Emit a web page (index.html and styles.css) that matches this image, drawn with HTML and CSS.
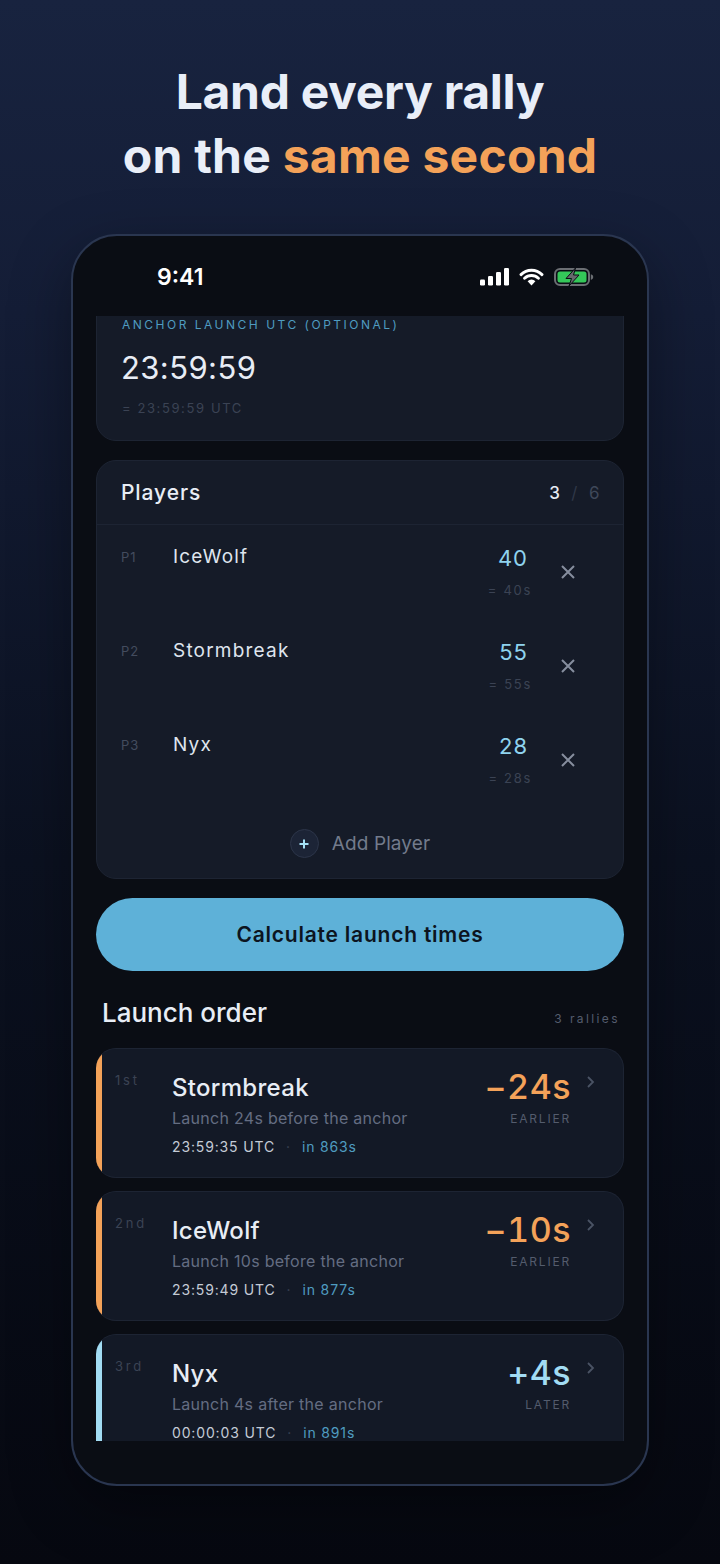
FILE: index.html
```html
<!DOCTYPE html>
<html>
<head>
<title>Launch order</title>
<link rel="stylesheet" href="styles.css">
</head>
<body>
    <h1 class="headline">Land every rally<br>on the <span class="accent">same second</span></h1>

    <div class="phone">
        <div class="status-bar">
            <span class="clock">9:41</span>
            <div class="status-icons">
                <svg width="29" height="18" viewBox="0 0 29 18">
                    <rect x="0" y="11.5" width="5" height="6" rx="1.2" fill="#fff"/>
                    <rect x="8" y="8" width="5" height="9.5" rx="1.2" fill="#fff"/>
                    <rect x="16" y="4" width="5" height="13.5" rx="1.2" fill="#fff"/>
                    <rect x="24" y="0" width="5" height="17.5" rx="1.2" fill="#fff"/>
                </svg>
                <svg width="25" height="18" viewBox="0 0 25 18">
                    <path d="M2 6.6a15 15 0 0 1 21 0M5.6 10.2a10 10 0 0 1 13.8 0" fill="none" stroke="#fff" stroke-width="2.9" stroke-linecap="round"/>
                    <path d="M8.6 13.2a5.5 5.5 0 0 1 7.8 0L12.5 17.6z" fill="#fff"/>
                </svg>
                <svg width="40" height="18" viewBox="0 0 40 18">
                    <rect x="1" y="1" width="34" height="16" rx="5" fill="none" stroke="#6b6e73" stroke-width="2"/>
                    <rect x="3.5" y="3.5" width="29" height="11" rx="2.5" fill="#34c759"/>
                    <path d="M36.8 6.2c1.6.4 2.4 1.4 2.4 2.8s-.8 2.4-2.4 2.8z" fill="#6b6e73"/>
                    <path d="M21.5 0 12 10.5h5.500L15 18l10-11h-5.500z" fill="#66696d" stroke="#0a0d14" stroke-width="1"/>
                </svg>
            </div>
        </div>

        <div class="screen">
            <div class="card anchor-card">
                <div class="anchor-label">ANCHOR LAUNCH UTC (OPTIONAL)</div>
                <div class="anchor-time">23:59:59</div>
                <div class="anchor-hint">= 23:59:59 UTC</div>
            </div>

            <div class="card players-card">
                <div class="players-head">
                    <span class="players-title">Players</span>
                    <span class="players-count"><b>3</b><i>/</i><span>6</span></span>
                </div>

                <div class="player-row">
                    <span class="player-num">P1</span>
                    <span class="player-name">IceWolf</span>
                    <div class="player-march">
                        <div class="march-value">40</div>
                        <div class="march-sub">= 40s</div>
                    </div>
                    <svg class="remove-icon" width="14" height="14" viewBox="0 0 14 14"><path d="M1 1l12 12M13 1 1 13"/></svg>
                </div>
                <div class="player-row">
                    <span class="player-num">P2</span>
                    <span class="player-name">Stormbreak</span>
                    <div class="player-march">
                        <div class="march-value">55</div>
                        <div class="march-sub">= 55s</div>
                    </div>
                    <svg class="remove-icon" width="14" height="14" viewBox="0 0 14 14"><path d="M1 1l12 12M13 1 1 13"/></svg>
                </div>
                <div class="player-row">
                    <span class="player-num">P3</span>
                    <span class="player-name">Nyx</span>
                    <div class="player-march">
                        <div class="march-value">28</div>
                        <div class="march-sub">= 28s</div>
                    </div>
                    <svg class="remove-icon" width="14" height="14" viewBox="0 0 14 14"><path d="M1 1l12 12M13 1 1 13"/></svg>
                </div>

                <div class="add-player">
                    <span class="add-circle">
                        <svg width="10" height="10" viewBox="0 0 10 10"><path d="M5 .5v9M.5 5h9"/></svg>
                    </span>
                    <span>Add Player</span>
                </div>
            </div>

            <button class="calc-button">Calculate launch times</button>

            <div class="order-head">
                <span class="order-title">Launch order</span>
                <span class="order-count">3 rallies</span>
            </div>

            <div class="card result-card earlier">
                <span class="result-rank">1st</span>
                <div class="result-main">
                    <div class="result-name">Stormbreak</div>
                    <div class="result-desc">Launch 24s before the anchor</div>
                    <div class="result-time">23:59:35 UTC<i>·</i><span>in 863s</span></div>
                </div>
                <div class="result-delta">
                    <div class="delta-value">−24s</div>
                    <div class="delta-label">EARLIER</div>
                </div>
                <svg class="chevron" width="9" height="14" viewBox="0 0 9 14"><path d="M2 2l5 5-5 5"/></svg>
            </div>

            <div class="card result-card earlier">
                <span class="result-rank">2nd</span>
                <div class="result-main">
                    <div class="result-name">IceWolf</div>
                    <div class="result-desc">Launch 10s before the anchor</div>
                    <div class="result-time">23:59:49 UTC<i>·</i><span>in 877s</span></div>
                </div>
                <div class="result-delta">
                    <div class="delta-value">−10s</div>
                    <div class="delta-label">EARLIER</div>
                </div>
                <svg class="chevron" width="9" height="14" viewBox="0 0 9 14"><path d="M2 2l5 5-5 5"/></svg>
            </div>

            <div class="card result-card later">
                <span class="result-rank">3rd</span>
                <div class="result-main">
                    <div class="result-name">Nyx</div>
                    <div class="result-desc">Launch 4s after the anchor</div>
                    <div class="result-time">00:00:03 UTC<i>·</i><span>in 891s</span></div>
                </div>
                <div class="result-delta">
                    <div class="delta-value">+4s</div>
                    <div class="delta-label">LATER</div>
                </div>
                <svg class="chevron" width="9" height="14" viewBox="0 0 9 14"><path d="M2 2l5 5-5 5"/></svg>
            </div>
        </div>
    </div>
</body>
</html>
```

FILE: styles.css
```css
html, body {
    margin: 0;
    height: 1564px;
    overflow: hidden;
}

body {
    font-family: Inter, "Liberation Sans", sans-serif;
    background: linear-gradient(180deg, #18233f 0%, #141d36 20%, #0b1120 55%, #060810 100%);
    color: #e8edf5;
}

.headline {
    margin: 0;
    padding-top: 60px;
    height: 234px;
    box-sizing: border-box;
    text-align: center;
    font-size: 48px;
    line-height: 64px;
    font-weight: 700;
    letter-spacing: 0.25px;
    color: #e9eef8;
}

.headline::first-line {
    letter-spacing: -0.3px;
}

.accent {
    color: #f4a259;
}

.phone {
    width: 578px;
    height: 1252px;
    margin: 0 auto;
    box-sizing: border-box;
    border: 2px solid #2a3650;
    border-radius: 46px;
    background: #0a0d14;
    box-shadow: 0 20px 60px rgba(0, 0, 0, 0.35);
}

.status-bar {
    height: 80px;
    padding: 2px 53px 0 84px;
    display: flex;
    justify-content: space-between;
    align-items: center;
    box-sizing: border-box;
}

.clock {
    font-size: 23px;
    font-weight: 600;
    color: #fff;
}

.status-icons {
    display: flex;
    align-items: center;
    gap: 10px;
}

.screen {
    height: 1125px;
    padding: 0 23px;
    overflow: hidden;
}

.card {
    background: #151b28;
    border: 1px solid #1d2433;
    border-radius: 20px;
    box-sizing: border-box;
}

.anchor-card {
    margin-top: -20px;
    height: 145px;
    padding: 21px 25px 0;
}

.anchor-label {
    font-size: 12px;
    line-height: 14px;
    letter-spacing: 2.5px;
    color: #4f9cc0;
}

.anchor-time {
    margin: 16px 0 0 -1px;
    font-size: 31px;
    line-height: 40px;
    letter-spacing: 0.4px;
    color: #e8edf5;
}

.anchor-hint {
    margin-top: 12px;
    font-size: 13px;
    line-height: 16px;
    letter-spacing: 1.6px;
    color: #3b4354;
}

.players-card {
    margin-top: 19px;
    height: 419px;
}

.players-head {
    height: 63px;
    padding: 0 23px 0 24px;
    display: flex;
    justify-content: space-between;
    align-items: center;
    border-bottom: 1px solid #1d2433;
}

.players-title {
    font-size: 21px;
    font-weight: 500;
    letter-spacing: 0.9px;
    color: #e8edf5;
}

.players-count {
    font-size: 17px;
    letter-spacing: 0.5px;
    color: #3f4859;
}

.players-count b {
    font-weight: 500;
    color: #e8edf5;
}

.players-count i {
    margin: 0 11px;
    font-style: normal;
    color: #2f3747;
}

.player-row {
    height: 94px;
    padding: 0 48px 0 24px;
    display: flex;
    align-items: center;
}

.player-num {
    width: 52px;
    align-self: flex-start;
    margin-top: 24px;
    font-size: 13px;
    line-height: 16px;
    letter-spacing: 1px;
    color: #434c5e;
}

.player-name {
    flex: 1;
    align-self: flex-start;
    margin-top: 19px;
    font-size: 19px;
    line-height: 26px;
    letter-spacing: 1.2px;
    color: #dfe5ee;
}

.player-march {
    width: 60px;
    margin-right: 29px;
    align-self: flex-start;
    text-align: right;
}

.march-value {
    margin-top: 18px;
    padding-right: 4px;
    font-size: 22px;
    line-height: 30px;
    letter-spacing: 1px;
    color: #8fd3ee;
}

.march-sub {
    margin-top: 9px;
    font-size: 13px;
    line-height: 16px;
    letter-spacing: 1.7px;
    color: #3b4354;
}

.remove-icon path {
    fill: none;
    stroke: #868e9e;
    stroke-width: 2;
}

.add-player {
    margin-top: 22px;
    display: flex;
    justify-content: center;
    align-items: center;
    gap: 13px;
    font-size: 19px;
    letter-spacing: 0.1px;
    color: #737b8c;
}

.add-circle {
    width: 29px;
    height: 29px;
    box-sizing: border-box;
    border: 1.5px solid #2c3549;
    border-radius: 50%;
    background: #1c2436;
    display: flex;
    justify-content: center;
    align-items: center;
}

.add-circle path {
    fill: none;
    stroke: #a5e0f5;
    stroke-width: 2;
}

.calc-button {
    display: block;
    width: 100%;
    height: 73px;
    margin-top: 19px;
    border: none;
    border-radius: 37px;
    background: #5eb1d8;
    font-family: inherit;
    font-size: 21px;
    font-weight: 600;
    letter-spacing: 0.78px;
    color: #0c1420;
}

.order-head {
    height: 77px;
    padding: 6px 4px 0 6px;
    display: flex;
    justify-content: space-between;
    align-items: center;
    box-sizing: border-box;
}

.order-title {
    font-size: 26px;
    font-weight: 500;
    color: #e8edf5;
}

.order-count {
    margin-top: 12px;
    font-size: 12px;
    letter-spacing: 2.4px;
    color: #545c6d;
}

.result-card {
    height: 130px;
    margin-bottom: 13px;
    padding: 0 52px 0 0;
    display: flex;
    overflow: hidden;
    border-left-width: 0;
    background: #131926;
    position: relative;
}

.result-card::before {
    content: "";
    width: 6px;
    flex: none;
}

.result-card.earlier::before {
    background: #f4a259;
}

.result-card.later::before {
    background: #a2dcf3;
}

.result-rank {
    width: 57px;
    margin: 23px 0 0 13px;
    box-sizing: border-box;
    font-size: 13px;
    line-height: 16px;
    letter-spacing: 2.8px;
    color: #3b4354;
}

.result-main {
    flex: 1;
    padding-top: 23px;
}

.result-name {
    font-size: 24px;
    line-height: 32px;
    font-weight: 500;
    letter-spacing: 0.3px;
    color: #e8edf5;
}

.result-desc {
    margin-top: 3px;
    font-size: 16px;
    line-height: 22px;
    letter-spacing: 0.28px;
    color: #646d82;
}

.result-time {
    margin-top: 10px;
    font-size: 14px;
    line-height: 16px;
    letter-spacing: 0.85px;
    color: #c4cbd6;
}

.result-time i {
    margin: 0 11px;
    font-style: normal;
    color: #3b4354;
}

.result-time span {
    color: #4f9cc0;
}

.result-delta {
    padding-top: 18px;
    text-align: right;
}

.delta-value {
    font-size: 34px;
    line-height: 40px;
    font-weight: 500;
    letter-spacing: 0.5px;
    font-variant-numeric: tabular-nums;
}

.earlier .delta-value {
    color: #f4a259;
}

.later .delta-value {
    color: #a2dcf3;
}

.delta-label {
    margin-top: 4px;
    font-size: 12px;
    line-height: 16px;
    letter-spacing: 1.8px;
    color: #545c6d;
}

.chevron {
    position: absolute;
    right: 28px;
    top: 26px;
}

.chevron path {
    fill: none;
    stroke: #4a5364;
    stroke-width: 1.8;
}
```
